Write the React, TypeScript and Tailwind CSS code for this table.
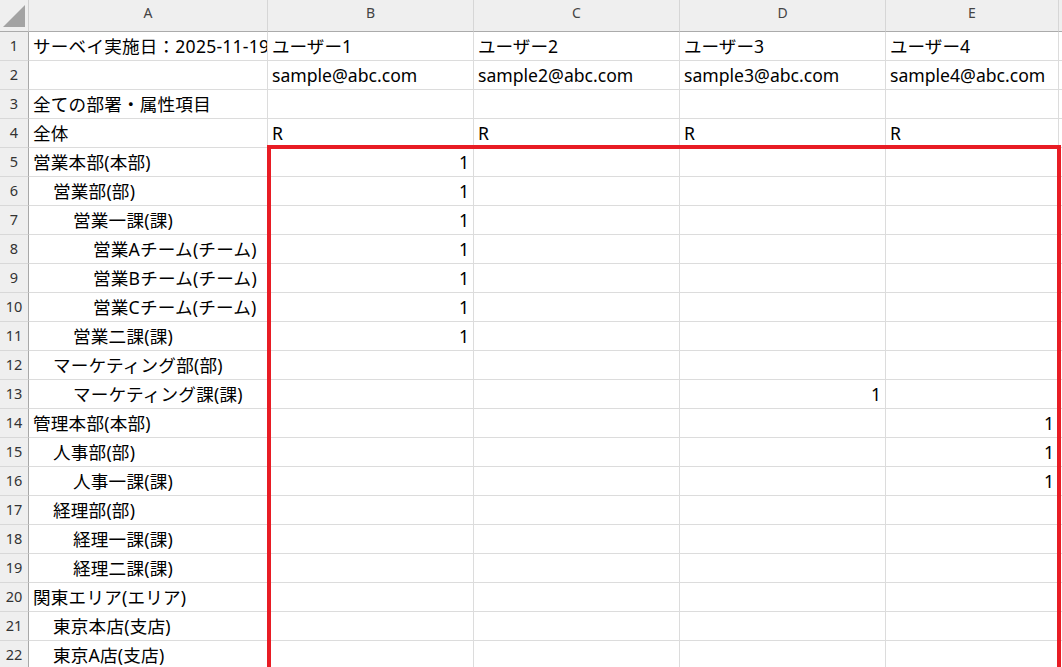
import React from "react";

type Row = { label: string; indent: number; vals: string[]; align?: "left" | "right" };

const rows: Row[] = [
  { label: "サーベイ実施日：2025-11-19", indent: 0, vals: ["ユーザー1", "ユーザー2", "ユーザー3", "ユーザー4"], align: "left" },
  { label: "", indent: 0, vals: ["sample@abc.com", "sample2@abc.com", "sample3@abc.com", "sample4@abc.com"], align: "left" },
  { label: "全ての部署・属性項目", indent: 0, vals: ["", "", "", ""] },
  { label: "全体", indent: 0, vals: ["R", "R", "R", "R"], align: "left" },
  { label: "営業本部(本部)", indent: 0, vals: ["1", "", "", ""] },
  { label: "営業部(部)", indent: 1, vals: ["1", "", "", ""] },
  { label: "営業一課(課)", indent: 2, vals: ["1", "", "", ""] },
  { label: "営業Aチーム(チーム)", indent: 3, vals: ["1", "", "", ""] },
  { label: "営業Bチーム(チーム)", indent: 3, vals: ["1", "", "", ""] },
  { label: "営業Cチーム(チーム)", indent: 3, vals: ["1", "", "", ""] },
  { label: "営業二課(課)", indent: 2, vals: ["1", "", "", ""] },
  { label: "マーケティング部(部)", indent: 1, vals: ["", "", "", ""] },
  { label: "マーケティング課(課)", indent: 2, vals: ["", "", "1", ""] },
  { label: "管理本部(本部)", indent: 0, vals: ["", "", "", "1"] },
  { label: "人事部(部)", indent: 1, vals: ["", "", "", "1"] },
  { label: "人事一課(課)", indent: 2, vals: ["", "", "", "1"] },
  { label: "経理部(部)", indent: 1, vals: ["", "", "", ""] },
  { label: "経理一課(課)", indent: 2, vals: ["", "", "", ""] },
  { label: "経理二課(課)", indent: 2, vals: ["", "", "", ""] },
  { label: "関東エリア(エリア)", indent: 0, vals: ["", "", "", ""] },
  { label: "東京本店(支店)", indent: 1, vals: ["", "", "", ""] },
  { label: "東京A店(支店)", indent: 1, vals: ["", "", "", ""] },
];

const indentCls = ["pl-[4px]", "pl-[24px]", "pl-[44px]", "pl-[64px]"];
const cols = ["A", "B", "C", "D", "E"];

export default function App() {
  return (
    <div
      className="relative w-[1062px] h-[667px] overflow-hidden bg-white text-black"
      style={{ fontFamily: '"Noto Sans", "Noto Sans CJK JP", sans-serif' }}
    >
      <div className="grid grid-cols-[29px_239px_206px_206px_206px_173px_40px] w-max">
        {/* header row */}
        <div className="h-[32px] bg-[#efefef] border-r border-b border-r-[#d0d0d0] border-b-[#ababab] relative">
          <svg className="absolute left-0 top-0" width="29" height="31" viewBox="0 0 29 31">
            <polygon points="3,27 25,27 25,5" fill="#a3a3a3" />
          </svg>
        </div>
        {cols.map((c) => (
          <div
            key={c}
            className="h-[32px] bg-[#efefef] border-r border-b border-r-[#d6d6d6] border-b-[#ababab] flex items-center justify-center pb-[7px] text-[14px] text-[#444]"
          >
            {c}
          </div>
        ))}
        <div className="h-[32px] bg-[#efefef] border-b border-b-[#ababab]" />
        {rows.map((r, i) => (
          <React.Fragment key={i}>
            <div className="h-[29px] bg-[#efefef] border-r border-b border-r-[#a8a8a8] border-b-[#d8d8d8] flex items-center justify-center text-[14.5px] text-[#333]">
              {i + 1}
            </div>
            <div
              className={`h-[29px] border-r border-b border-[#dcdcdc] flex items-center whitespace-nowrap overflow-hidden text-[17.6px] tracking-[0.2px] ${indentCls[r.indent]}`}
            >
              {r.label}
            </div>
            {r.vals.map((v, j) => (
              <div
                key={j}
                className={`h-[29px] border-r border-b border-[#dcdcdc] flex items-center whitespace-nowrap overflow-hidden text-[17.6px] ${
                  r.align === "left" ? "justify-start pl-[4px]" : "justify-end pr-[4px]"
                }`}
              >
                {v}
              </div>
            ))}
            <div className="h-[29px] border-b border-[#dcdcdc]" />
          </React.Fragment>
        ))}
      </div>
      <div className="absolute left-[267px] top-[145px] w-[794px] h-[600px] border-4 border-[#e81c24] pointer-events-none" />
    </div>
  );
}
